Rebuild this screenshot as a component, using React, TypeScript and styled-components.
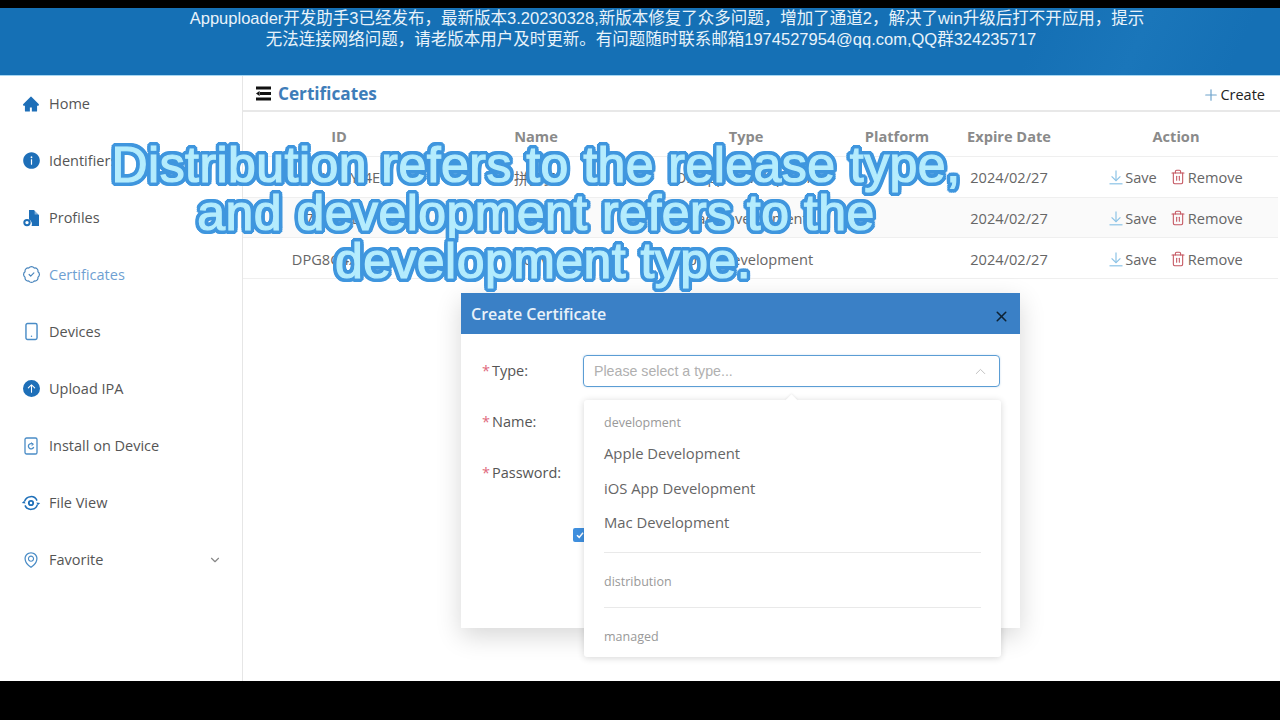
import styled, { createGlobalStyle } from "styled-components";
import { ReactNode } from "react";
import { BadgeCheck, ChevronDown, ChevronUp, Plus, Smartphone, Trash2, X } from "lucide-react";
import { AiFillHome, AiFillInfoCircle, AiOutlineEnvironment } from "react-icons/ai";
import { BsArrowUpCircleFill } from "react-icons/bs";

const GlobalStyle = createGlobalStyle`
  html, body {
    margin: 0;
    padding: 0;
    background: #000;
  }
  body {
    font-family: "Open Sans", "Noto Sans CJK SC", sans-serif;
  }
`;

const Screen = styled.div`
  position: relative;
  width: 1280px;
  height: 720px;
  overflow: hidden;
  background: #000;
  padding: 8px 0 39px;
  box-sizing: border-box;
  display: flex;
  flex-direction: column;
`;

const Banner = styled.div`
  flex: none;
  height: 68px;
  box-sizing: border-box;
  padding: 0 0 0 54px;
  background: linear-gradient(115deg, #1570b5 80%, #1a76ba 88%, #1570b5 96%);
  border-bottom: 1px solid #a6d6f2;
  color: #e9f3fa;
  font-family: "Liberation Sans", "Noto Sans CJK SC", sans-serif;
  font-size: 16.5px;
  line-height: 21px;
  text-align: center;
`;

const BannerLine = styled.div<{ $short?: boolean }>`
  padding-right: ${(p) => (p.$short ? "32px" : "0")};
`;

const Body = styled.div`
  flex: 1;
  min-height: 0;
  display: flex;
  background: #fff;
`;

const Sidebar = styled.nav`
  flex: none;
  width: 243px;
  box-sizing: border-box;
  border-right: 1px solid #e6e6e6;
`;

const NavItem = styled.div<{ $active?: boolean }>`
  height: 57px;
  box-sizing: border-box;
  padding: 0 20px 2px 22px;
  display: flex;
  align-items: center;
  color: ${(p) => (p.$active ? "#6f9fd2" : "#555")};
  font-size: 14.5px;
  svg {
    flex: none;
  }
`;

const NavIcon = styled.span`
  width: 18px;
  height: 18px;
  margin-right: 9px;
  display: flex;
  align-items: center;
  justify-content: center;
  color: #1e6fb8;
`;

const NavLabel = styled.span`
  flex: 1;
`;

const Main = styled.main`
  flex: 1;
  min-width: 0;
  padding-right: 2px;
`;

const TitleBar = styled.div`
  height: 36px;
  box-sizing: border-box;
  margin-right: -2px;
  padding: 0 15px 0 12px;
  border-bottom: 2px solid #e8e8e8;
  display: flex;
  align-items: center;
`;

const PageTitle = styled.h1`
  margin: 1px 0 0 6px;
  flex: 1;
  color: #3e7db9;
  font-size: 17.2px;
  font-weight: 700;
`;

const CreateButton = styled.div`
  display: flex;
  align-items: center;
  margin-top: 3px;
  color: #222;
  font-size: 14.5px;
  svg {
    color: #6ea3cc;
  }
`;

const Row = styled.div<{ $head?: boolean; $shade?: boolean }>`
  display: grid;
  grid-template-columns: 192px 202px 218px 84px 140px 194px;
  height: ${(p) => (p.$head ? "45px" : "40.7px")};
  box-sizing: border-box;
  padding-top: ${(p) => (p.$head ? "3px" : "1px")};
  align-items: center;
  text-align: center;
  border-bottom: 1px solid #efefef;
  background: ${(p) => (p.$shade ? "#fafafa" : "#fff")};
  color: ${(p) => (p.$head ? "#8a8a8a" : "#666")};
  font-size: 14.6px;
  font-weight: ${(p) => (p.$head ? 700 : 400)};
`;

const Actions = styled.div`
  display: flex;
  justify-content: center;
  gap: 13px;
`;

const ActionLink = styled.span`
  display: flex;
  align-items: center;
  gap: 2px;
  svg {
    color: ${(p) => p.color};
  }
`;

const Subtitle = styled.div`
  position: absolute;
  left: 0;
  top: 141px;
  width: 1072px;
  text-align: center;
  font-family: "Liberation Sans", sans-serif;
  font-size: 50px;
  line-height: 48px;
  letter-spacing: 0.45px;
  color: #b4ecfd;
  -webkit-text-stroke: 1.2px #b4ecfd;
  text-shadow: 4px 0 0 #3f96de, -4px 0 0 #3f96de, 0 4px 0 #3f96de, 0 -4px 0 #3f96de,
    3px 3px 0 #3f96de, -3px 3px 0 #3f96de, 3px -3px 0 #3f96de, -3px -3px 0 #3f96de,
    4px 2px 0 #3f96de, -4px 2px 0 #3f96de, 4px -2px 0 #3f96de, -4px -2px 0 #3f96de,
    2px 4px 0 #3f96de, -2px 4px 0 #3f96de, 2px -4px 0 #3f96de, -2px -4px 0 #3f96de;
  z-index: 5;
`;

const SubtitleLine = styled.div<{ $shift?: number }>`
  transform: translateX(${(p) => p.$shift ?? 0}px);
`;

const Modal = styled.div`
  position: absolute;
  left: 461px;
  top: 293px;
  width: 559px;
  height: 335px;
  background: #fff;
  box-shadow: 0 8px 24px rgba(0, 0, 0, 0.16);
  z-index: 2;
`;

const ModalHeader = styled.div`
  height: 41px;
  box-sizing: border-box;
  padding: 0 10px 0 10px;
  background: #3a80c6;
  display: flex;
  align-items: center;
  justify-content: space-between;
  color: #e8f1f9;
  font-size: 16px;
  font-weight: 600;
  svg {
    color: #0e2233;
    margin-top: 5px;
  }
`;

const ModalBody = styled.div`
  padding: 21px 20px 0 21px;
`;

const FormRow = styled.div`
  display: flex;
  align-items: center;
  height: 32px;
  margin-bottom: 19px;
`;

const FormLabel = styled.label`
  flex: none;
  width: 101px;
  padding-bottom: 2px;
  color: #555;
  font-size: 14.5px;
`;

const Required = styled.span`
  color: #e0697c;
  margin-right: 2px;
`;

const SelectBox = styled.div`
  flex: 1;
  height: 32px;
  box-sizing: border-box;
  padding: 0 10px 0 10px;
  border: 1px solid #5b9dd4;
  border-radius: 4px;
  box-shadow: 0 0 2px rgba(80, 150, 210, 0.35);
  display: flex;
  align-items: center;
  justify-content: space-between;
  color: #b0b0b0;
  font-family: "Liberation Sans", sans-serif;
  font-size: 14.2px;
  svg {
    color: #bdbdbd;
  }
`;

const CheckRow = styled.div`
  display: flex;
  padding: 20px 0 0 91px;
`;

const CheckMark = styled.span`
  width: 14px;
  height: 14px;
  border-radius: 2px;
  background: #3f8fde;
  color: #fff;
  display: flex;
  align-items: center;
  justify-content: center;
`;

const Dropdown = styled.div`
  position: absolute;
  left: 584px;
  top: 400px;
  width: 417px;
  height: 257px;
  box-sizing: border-box;
  padding: 13px 20px 0;
  background: #fff;
  border-radius: 3px;
  box-shadow: 0 1px 7px rgba(0, 0, 0, 0.16);
  z-index: 3;
  &::before {
    content: "";
    position: absolute;
    left: 203px;
    top: -4px;
    width: 9px;
    height: 9px;
    background: #fff;
    transform: rotate(45deg);
    box-shadow: -1px -1px 2px rgba(0, 0, 0, 0.05);
  }
`;

const GroupLabel = styled.div`
  color: #999;
  font-size: 12.5px;
  height: 20px;
  line-height: 20px;
`;

const Option = styled.div`
  color: #666;
  font-size: 14.8px;
  height: 34.6px;
  line-height: 34.6px;
`;

const OptionList = styled.div`
  padding-top: 3px;
`;

const Divider = styled.div<{ $top: number; $bottom: number }>`
  height: 1px;
  background: #e9e9e9;
  margin: ${(p) => p.$top}px 0 ${(p) => p.$bottom}px;
`;

const TocIcon = () => (
  <svg width="17" height="15" viewBox="0 0 17 15" fill="#111">
    <rect x="1" y="0.5" width="15" height="3" />
    <rect x="5" y="6" width="11" height="3" />
    <rect x="1" y="11.5" width="15" height="3" />
    <path d="M1 7.5 4.6 5v5z" />
  </svg>
);

const ProfileIcon = () => (
  <svg width="17" height="18" viewBox="0 0 17 18" fill="#1e6fb8">
    <path d="M6 1h5l5 5v11H8.6a5 5 0 0 0-2.6-6.4z" />
    <path d="M11.6 1 16 5.4h-4.4z" fill="#fff" opacity="0.45" />
    <circle cx="4" cy="13.6" r="2.7" fill="none" stroke="#1e6fb8" strokeWidth="2" />
  </svg>
);

const InstallIcon = () => (
  <svg width="14" height="18" viewBox="0 0 14 18" fill="none" stroke="#4a8cc6" strokeWidth="1.3">
    <rect x="1" y="1" width="12" height="16" rx="1.6" />
    <path d="M9 7.3A2.7 2.7 0 1 0 9.7 10" />
    <path d="M7.2 5.6 9.4 7.3 7.6 8.6" strokeWidth="1" />
  </svg>
);

const FileViewIcon = () => (
  <svg width="20" height="16" viewBox="0 0 20 16" fill="none" stroke="#1e6fb8" strokeWidth="1.5">
    <circle cx="10" cy="8" r="2.2" strokeWidth="1.8" />
    <path d="M3.6 6.4A6.6 6.6 0 0 1 16 5.6" />
    <path d="M16.4 9.6A6.6 6.6 0 0 1 4 10.4" />
    <path d="M0.8 8 3.2 5.8 4.6 8.4z" fill="#1e6fb8" stroke="none" />
    <path d="M19.2 8 16.8 10.2 15.4 7.6z" fill="#1e6fb8" stroke="none" />
  </svg>
);

const SaveIcon = () => (
  <svg width="14" height="16" viewBox="0 0 14 16" fill="none" stroke="currentColor" strokeWidth="1.2">
    <path d="M7 1.5v10" />
    <path d="M2.6 7.4 7 11.6l4.4-4.2" />
    <path d="M0.5 14.8h13" />
  </svg>
);

const navItems: { label: string; icon: ReactNode; active?: boolean; arrow?: boolean }[] = [
  { label: "Home", icon: <AiFillHome size={18} /> },
  { label: "Identifiers", icon: <AiFillInfoCircle size={19} /> },
  { label: "Profiles", icon: <ProfileIcon /> },
  { label: "Certificates", icon: <BadgeCheck size={19} strokeWidth={1.5} color="#4a86bd" />, active: true },
  { label: "Devices", icon: <Smartphone size={19} strokeWidth={1.8} color="#4a8cc6" /> },
  { label: "Upload IPA", icon: <BsArrowUpCircleFill size={17} /> },
  { label: "Install on Device", icon: <InstallIcon /> },
  { label: "File View", icon: <FileViewIcon /> },
  { label: "Favorite", icon: <AiOutlineEnvironment size={18} color="#4a8cc6" />, arrow: true },
];

const rows = [
  { id: "7KHNWY/4E", name: "拼多多", type: "iOS App Development" },
  { id: "7X2M5LW", name: "test", type: "Mac Development" },
  { id: "DPG8G4XK2Q", name: "dev", type: "Apple Development" },
];

const App = () => {
  return (
    <Screen>
      <GlobalStyle />
      <Banner>
        <BannerLine>Appuploader开发助手3已经发布，最新版本3.20230328,新版本修复了众多问题，增加了通道2，解决了win升级后打不开应用，提示</BannerLine>
        <BannerLine $short>无法连接网络问题，请老版本用户及时更新。有问题随时联系邮箱1974527954@qq.com,QQ群324235717</BannerLine>
      </Banner>
      <Body>
        <Sidebar>
          {navItems.map((item) => (
            <NavItem key={item.label} $active={item.active}>
              <NavIcon>{item.icon}</NavIcon>
              <NavLabel>{item.label}</NavLabel>
              {item.arrow && <ChevronDown size={14} color="#888" />}
            </NavItem>
          ))}
        </Sidebar>
        <Main>
          <TitleBar>
            <TocIcon />
            <PageTitle>Certificates</PageTitle>
            <CreateButton>
              <Plus size={18} strokeWidth={1.6} />
              Create
            </CreateButton>
          </TitleBar>
          <Row $head>
            <span>ID</span>
            <span>Name</span>
            <span>Type</span>
            <span>Platform</span>
            <span>Expire Date</span>
            <span>Action</span>
          </Row>
          {rows.map((row, i) => (
            <Row key={row.id} $shade={i === 1}>
              <span>{row.id}</span>
              <span>{row.name}</span>
              <span>{row.type}</span>
              <span />
              <span>2024/02/27</span>
              <Actions>
                <ActionLink color="#8cc3e6">
                  <SaveIcon />
                  Save
                </ActionLink>
                <ActionLink color="#c4545f">
                  <Trash2 size={16} strokeWidth={1.6} />
                  Remove
                </ActionLink>
              </Actions>
            </Row>
          ))}
        </Main>
      </Body>
      <Modal>
        <ModalHeader>
          Create Certificate
          <X size={17} strokeWidth={2.2} />
        </ModalHeader>
        <ModalBody>
          <FormRow>
            <FormLabel>
              <Required>*</Required>Type:
            </FormLabel>
            <SelectBox>
              Please select a type...
              <ChevronUp size={17} strokeWidth={1.3} />
            </SelectBox>
          </FormRow>
          <FormRow>
            <FormLabel>
              <Required>*</Required>Name:
            </FormLabel>
          </FormRow>
          <FormRow>
            <FormLabel>
              <Required>*</Required>Password:
            </FormLabel>
          </FormRow>
          <CheckRow>
            <CheckMark>
              <svg width="10" height="10" viewBox="0 0 10 10" fill="none" stroke="#fff" strokeWidth="1.5">
                <path d="M2 5.2 4.2 7.4 8 2.8" />
              </svg>
            </CheckMark>
          </CheckRow>
        </ModalBody>
      </Modal>
      <Dropdown>
        <GroupLabel>development</GroupLabel>
        <OptionList>
          <Option>Apple Development</Option>
          <Option>iOS App Development</Option>
          <Option>Mac Development</Option>
        </OptionList>
        <Divider $top={12} $bottom={19} />
        <GroupLabel>distribution</GroupLabel>
        <Divider $top={15} $bottom={19} />
        <GroupLabel>managed</GroupLabel>
      </Dropdown>
      <Subtitle>
        <SubtitleLine>Distribution refers to the release type,</SubtitleLine>
        <SubtitleLine>and development refers to the</SubtitleLine>
        <SubtitleLine $shift={7}>development type.</SubtitleLine>
      </Subtitle>
    </Screen>
  );
};

export default App;
